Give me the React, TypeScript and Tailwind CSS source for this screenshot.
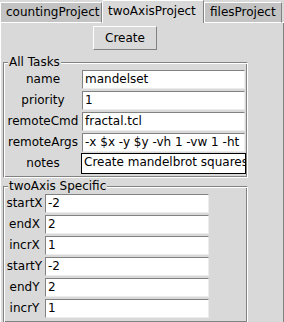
import React from "react";

const Entry = ({ value, w, focus }: { value: string; w: string; focus?: boolean }) => (
  <div className={`${w} h-[21px] p-px ${focus ? "bg-black" : "bg-[#d9d9d9]"}`}>
    <div
      className={`h-full bg-white overflow-hidden whitespace-nowrap pl-[2px] leading-[17px] ${
        focus ? "" : "border-t border-l border-t-[#828282] border-l-[#828282] border-b border-r border-b-[#ececec] border-r-[#ececec]"
      }`}
    >
      {value}
    </div>
  </div>
);

const Row = ({ label, value, lw, ew, focus }: { label: string; value: string; lw: string; ew: string; focus?: boolean }) => (
  <div className="flex h-[21px]">
    <div className={`${lw} text-center leading-[21px] whitespace-nowrap`}>{label}</div>
    <Entry value={value} w={ew} focus={focus} />
  </div>
);

const Frame = ({ title, children }: { title: string; children: React.ReactNode }) => (
  <fieldset className="ml-[1px] w-[245px] min-w-0 m-0 px-[1px] pt-0 pb-[3px] border border-t-[#828282] border-l-[#828282] border-b-white border-r-white shadow-[inset_1px_1px_0_#ffffff,inset_-1px_-1px_0_#828282]">
    <legend className="ml-[3px] px-[1px] bg-[#d9d9d9] leading-[14px] relative">{title}</legend>
    {children}
  </fieldset>
);

export default function App() {
  return (
    <div
      className="w-[284px] h-[322px] overflow-hidden bg-[#d9d9d9] text-black text-[12px]"
      style={{ fontFamily: '"DejaVu Sans", sans-serif' }}
    >
      {/* tabs */}
      <div className="flex items-end h-[23px] relative">
        <div className="w-[102px] h-[21px] bg-[#c3c3c3] border-t border-l border-t-white border-l-white border-r border-r-[#828282] border-b border-b-white pl-[5px] leading-[18px] whitespace-nowrap">
          countingProject
        </div>
        <div className="w-[102px] h-[23px] bg-[#d9d9d9] border-t border-l border-t-white border-l-white border-r border-r-[#828282] pl-[5px] leading-[20px] whitespace-nowrap rounded-tl-[2px]">
          twoAxisProject
        </div>
        <div className="w-[78px] h-[21px] bg-[#c3c3c3] border-t border-l border-t-white border-l-white border-r border-r-[#828282] border-b border-b-white pl-[5px] leading-[18px] whitespace-nowrap">
          filesProject
        </div>
        <div className="w-[2px] h-[1px] bg-white"></div>
      </div>
      {/* panel */}
      <div className="h-[299px] border-l border-l-white border-r border-r-[#828282] pl-[1px]">
        <div className="w-[246px] flex justify-center pt-[3px]">
          <div className="w-[64px] h-[24px] border border-t-white border-l-white border-b-[#828282] border-r-[#828282] text-center leading-[22px]">
            Create
          </div>
        </div>
        <div className="mt-[5px]">
          <Frame title="All Tasks">
            <Row label="name" value="mandelset" lw="w-[76px]" ew="w-[165px]" />
            <Row label="priority" value="1" lw="w-[76px]" ew="w-[165px]" />
            <Row label="remoteCmd" value="fractal.tcl" lw="w-[76px]" ew="w-[165px]" />
            <Row label="remoteArgs" value="-x $x -y $y -vh 1 -vw 1 -ht" lw="w-[76px]" ew="w-[165px]" />
            <Row label="notes" value="Create mandelbrot squares" lw="w-[76px]" ew="w-[165px]" focus />
          </Frame>
        </div>
        <div className="mt-[1px]">
          <Frame title="twoAxis Specific">
            <Row label="startX" value="-2" lw="w-[39px]" ew="w-[166px]" />
            <Row label="endX" value="2" lw="w-[39px]" ew="w-[166px]" />
            <Row label="incrX" value="1" lw="w-[39px]" ew="w-[166px]" />
            <Row label="startY" value="-2" lw="w-[39px]" ew="w-[166px]" />
            <Row label="endY" value="2" lw="w-[39px]" ew="w-[166px]" />
            <Row label="incrY" value="1" lw="w-[39px]" ew="w-[166px]" />
          </Frame>
        </div>
      </div>
    </div>
  );
}
